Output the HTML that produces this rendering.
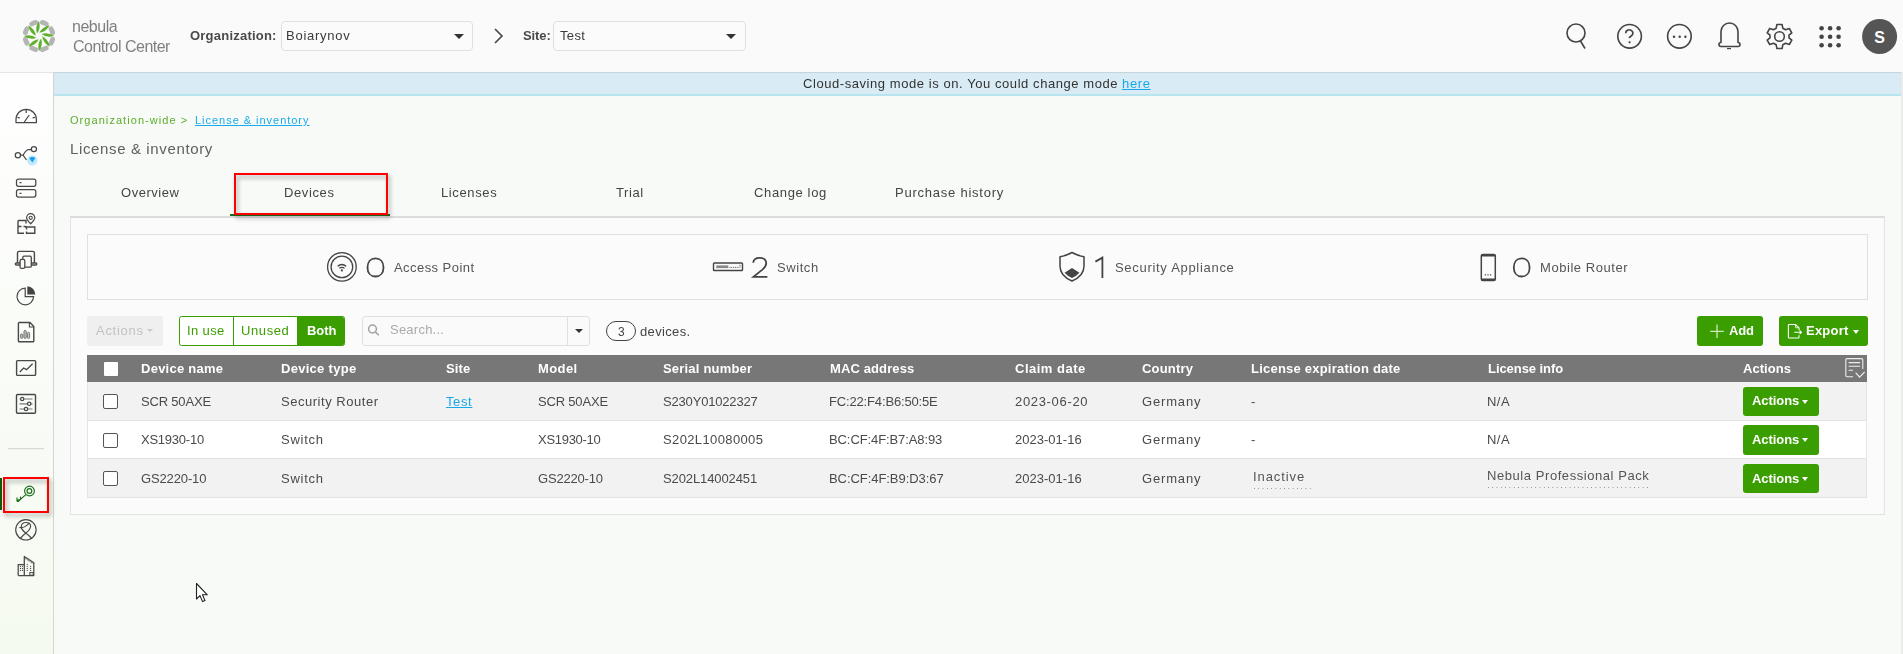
<!DOCTYPE html>
<html><head><meta charset="utf-8"><title>License &amp; inventory</title>
<style>
*{box-sizing:border-box;margin:0;padding:0}
html,body{width:1903px;height:654px;overflow:hidden;background:#f8faf8;font-family:"Liberation Sans",sans-serif;color:#555}
.abs{position:absolute}
.tx{position:absolute;white-space:pre;font-family:"Liberation Sans",sans-serif;will-change:transform}
#hdr{position:absolute;left:0;top:0;width:1903px;height:72px;background:#fafafa}
#side{position:absolute;left:0;top:72px;width:54px;height:582px;border-top:1px solid #e6e6e6;background:linear-gradient(#fefefe,#f5faf0);border-right:1px solid #d4d4d4}
#banner{position:absolute;left:54px;top:72px;width:1847px;height:24px;background:#d9ebf4;border-bottom:2px solid #b8e4f0;box-shadow:inset 0 1px 1px rgba(0,0,0,.1)}
.sel{position:absolute;height:30px;border:1px solid #e0e0e0;border-radius:4px;background:#fbfbfb}
.caret{position:absolute;width:0;height:0;border-left:5px solid transparent;border-right:5px solid transparent;border-top:5px solid #333}
#panel{position:absolute;left:70px;top:216px;width:1815px;height:299px;background:#fbfbfb;border:1px solid #e3e3e3;border-top:2px solid #dcdcdc}
#summary{position:absolute;left:87px;top:234px;width:1781px;height:66px;border:1px solid #e0e0e0;background:#fbfbfb}
.btn{position:absolute;background:#3a9e00;border-radius:3px}
.row{position:absolute;left:87px;width:1780px}
.cb{position:absolute;left:103px;width:15px;height:15px;border:1px solid #555;border-radius:2px;background:#fff}
.wcaret{position:absolute;width:0;height:0;border-left:4px solid transparent;border-right:4px solid transparent;border-top:4px solid #fff}

</style></head><body>
<div id="hdr">
 <svg class="abs" style="left:21px;top:17.5px" width="36" height="36" viewBox="-18 -18 36 36"><path fill="none" stroke="#b5b5b5" stroke-width="4.9" stroke-linecap="round" d="M3.39,-13.58A14.0,14.0 0 0 1 7.21,-12.00M12.00,-7.21A14.0,14.0 0 0 1 13.58,-3.39M13.58,3.39A14.0,14.0 0 0 1 12.00,7.21M7.21,12.00A14.0,14.0 0 0 1 3.39,13.58M-3.39,13.58A14.0,14.0 0 0 1 -7.21,12.00M-12.00,7.21A14.0,14.0 0 0 1 -13.58,3.39M-13.58,-3.39A14.0,14.0 0 0 1 -12.00,-7.21M-7.21,-12.00A14.0,14.0 0 0 1 -3.39,-13.58"/><path fill="#5fb02c" d="M-2.06,-2.45Q2.13,-7.71 0.00,-15.30Q-4.39,-8.75 -2.06,-2.45ZM0.28,-3.19Q6.96,-3.95 10.82,-10.82Q3.09,-9.29 0.28,-3.19ZM2.45,-2.06Q7.71,2.13 15.30,0.00Q8.75,-4.39 2.45,-2.06ZM3.19,0.28Q3.95,6.96 10.82,10.82Q9.29,3.09 3.19,0.28ZM2.06,2.45Q-2.13,7.71 0.00,15.30Q4.39,8.75 2.06,2.45ZM-0.28,3.19Q-6.96,3.95 -10.82,10.82Q-3.09,9.29 -0.28,3.19ZM-2.45,2.06Q-7.71,-2.13 -15.30,0.00Q-8.75,4.39 -2.45,2.06ZM-3.19,-0.28Q-3.95,-6.96 -10.82,-10.82Q-9.29,-3.09 -3.19,-0.28Z"/></svg>
 <div class="sel" style="left:281px;top:21px;width:192px"><span class="caret" style="left:172px;top:12px"></span></div>
 <svg class="abs" style="left:490px;top:27px" width="16" height="18" viewBox="0 0 16 18"><path d="M5 2 L12 9 L5 16" fill="none" stroke="#444" stroke-width="1.6"/></svg>
 <div class="sel" style="left:553px;top:21px;width:193px"><span class="caret" style="left:172px;top:12px"></span></div>
 <svg class="abs" style="left:1560px;top:15px" width="343" height="45" viewBox="1560 15 343 45" fill="none" stroke="#444" stroke-width="1.6">
  <circle cx="1576" cy="33" r="9"/><path d="M1580.5 41 L1585 48.5"/>
  <circle cx="1629.6" cy="36.3" r="11.8"/>
  <path d="M1625.7 33.2 a3.6 3.3 0 1 1 5.5 2.7 q-1.7 1 -1.9 2.2" stroke-width="1.7"/>
  <circle cx="1629.6" cy="42.3" r="1.1" fill="#444" stroke="none"/>
  <circle cx="1679.4" cy="36.3" r="11.8"/>
  <g fill="#444" stroke="none"><circle cx="1674" cy="36.7" r="1.2"/><circle cx="1679.7" cy="36.7" r="1.2"/><circle cx="1685.4" cy="36.7" r="1.2"/></g>
  <path d="M1721 42.5 q-2 0 -2 2 q0 2 2 2 h17 q2 0 2 -2 q0 -2 -2 -2 v-11 a8.5 8.5 0 0 0 -17 0 z" stroke-linejoin="round"/>
  <path d="M1727 48.6 h4" stroke-width="1.2"/>
  <g transform="translate(1779.5 36.5)">
   <path d="M-2.6,-12 L2.6,-12 L3.3,-8.3 L6.1,-6.7 L9.8,-8 L12.3,-3.6 L9.5,-1.3 L9.5,1.3 L12.3,3.6 L9.8,8 L6.1,6.7 L3.3,8.3 L2.6,12 L-2.6,12 L-3.3,8.3 L-6.1,6.7 L-9.8,8 L-12.3,3.6 L-9.5,1.3 L-9.5,-1.3 L-12.3,-3.6 L-9.8,-8 L-6.1,-6.7 L-3.3,-8.3 Z" stroke-linejoin="round"/>
   <circle r="4.8"/>
  </g>
  <g fill="#444" stroke="none">
   <circle cx="1821.6" cy="28.2" r="2.3"/><circle cx="1830.1" cy="28.2" r="2.3"/><circle cx="1838.6" cy="28.2" r="2.3"/>
   <circle cx="1821.6" cy="36.8" r="2.3"/><circle cx="1830.1" cy="36.8" r="2.3"/><circle cx="1838.6" cy="36.8" r="2.3"/>
   <circle cx="1821.6" cy="45.3" r="2.3"/><circle cx="1830.1" cy="45.3" r="2.3"/><circle cx="1838.6" cy="45.3" r="2.3"/>
  </g>
  <circle cx="1879.6" cy="36.5" r="17.5" fill="#555" stroke="none"/>
  <text x="1879.6" y="42.5" fill="#fff" stroke="none" font-family="Liberation Sans" font-weight="bold" font-size="16" text-anchor="middle">S</text>
 </svg>
</div>
<div id="side"></div>
<svg class="abs" style="left:0;top:0" width="54" height="654" viewBox="0 0 54 654" fill="none" stroke="#484848" stroke-width="1.25">
 <!-- gauge -->
 <path d="M16 122.5 V119.5 A10.2 10.2 0 0 1 36.4 119.5 V122.5 Z" stroke-linejoin="round"/>
 <path d="M26.2 109 V113 M17.5 117.3 L19.8 117.8 M34.9 117.3 L32.6 117.8 M24.3 122 L29.2 115"/>
 <!-- share -->
 <circle cx="17.9" cy="155.2" r="2.6"/><circle cx="33.9" cy="149.1" r="2.6"/>
 <path d="M20.5 155.2 H23 Q25 151 28 149.5 H31.3 M23 155.2 L26.5 160"/>
 <circle cx="32.3" cy="160.4" r="5.2" fill="#c4e8fb" stroke="none"/>
 <path d="M29.4 158.6 L30.6 157 H34 L35.2 158.6 L32.3 162.6 Z" fill="#19a3e6" stroke="none"/>
 <!-- servers -->
 <rect x="16.5" y="179" width="19.3" height="7.3" rx="2"/>
 <rect x="16.5" y="189.7" width="19.3" height="7.3" rx="2"/>
 <path d="M19.5 182.6 H21.5 M19.5 193.3 H21.5" stroke-width="1.3"/>
 <!-- floor plan -->
 <path d="M18 220.5 H26 V223.5 M26 226 V228 M18 226.5 H21.5 M23.5 226.5 H25.5 M26 227 H34.8 V233.3 H26.5 V231.5 M26.5 229.5 V228 M18 220.5 V233.3 H24" stroke-width="1.4"/>
 <path d="M30.7 223.8 Q26.6 219.8 26.6 217.8 A4.1 4.1 0 0 1 34.8 217.8 Q34.8 219.8 30.7 223.8 Z" stroke-width="1.2"/>
 <circle cx="30.7" cy="217.8" r="1.6" stroke-width="1.1"/>
 <!-- devices -->
 <path d="M17.5 263 V253 Q17.5 251.4 19.1 251.4 H32.8 Q34.4 251.4 34.4 253 V263" stroke-width="1.4"/>
 <rect x="15.3" y="263" width="21.5" height="2" rx="1" stroke-width="1.3"/>
 <rect x="22.8" y="256.2" width="8.5" height="11" rx="1.2" stroke-width="1.3" fill="#f8faf7"/>
 <rect x="20.1" y="259.4" width="4.7" height="9" rx="1.5" stroke-width="1.3" fill="#f8faf7"/>
 <!-- pie -->
 <path d="M25.2 288.2 A8.3 8.3 0 1 0 33.6 296.6 H25.2 Z" stroke-width="1.2"/>
 <path d="M27.3 286.3 A8.2 8.2 0 0 1 35.3 294.4 H27.3 Z" fill="#444" stroke="none"/>
 <!-- report -->
 <path d="M19.2 322.5 H30 L33.8 326.5 V341 Q33.8 341.8 33 341.8 H19.2 Q18.4 341.8 18.4 341 V323.3 Q18.4 322.5 19.2 322.5 Z" stroke-width="1.4"/>
 <path d="M29.4 322.8 V327 H33.6" stroke-width="1.1"/>
 <g stroke-width="0.9" stroke="#666" fill="#c8c8c8"><rect x="20.6" y="334" width="2.2" height="4.4" rx="1"/><rect x="24" y="330.4" width="2.2" height="8" rx="1"/><rect x="27.4" y="332.4" width="2.2" height="6" rx="1"/></g>
 <!-- chart -->
 <rect x="16.6" y="360.6" width="19" height="14.8" rx="0.8" stroke-width="1.4"/>
 <path d="M19.8 372 L23.6 368 L26.6 369.6 L32.6 363.8" stroke-width="1.3"/>
 <!-- settings -->
 <rect x="16.5" y="394.5" width="19" height="18.8" rx="1" stroke-width="1.4"/>
 <path d="M19.5 399 H32.5 M19.5 403.8 H32.5 M19.5 409 H32.5" stroke-width="1.2" stroke="#777"/>
 <circle cx="22.2" cy="399" r="1.6" fill="#f8faf7" stroke-width="1.2"/>
 <circle cx="29.2" cy="403.8" r="1.7" fill="#f8faf7" stroke-width="1.2"/>
 <circle cx="26" cy="409" r="1.7" fill="#f8faf7" stroke-width="1.2"/>
 <!-- divider -->
 <path d="M8 448.7 H44" stroke="#d8d8d8" stroke-width="1.2"/>
 <!-- key selected -->
 <rect x="0" y="478" width="2" height="32" fill="#0b5e0b" stroke="none"/>
 <!-- support -->
 <circle cx="25.9" cy="529.8" r="10.2" stroke-width="1.15"/>
 <path d="M20.2 538.8 C22.3 535.6 24.6 534 26.6 532.4 C29.3 530.2 30.8 528.2 30.6 525.6 C30.3 523.3 28.4 522.5 26 522.5 C23.4 522.5 21.3 524.1 21.3 526.7 C21.3 529.1 23 531 25.1 532.5 C27.6 534.3 29.9 535.8 31.8 538.8" stroke-width="1.15"/>
 <path d="M19.3 527.5 Q23.8 528.1 26.4 525.6 Q28 524.1 29.6 523" stroke-width="1.05"/>
 <!-- building -->
 <path d="M24.3 575.6 V556.4 L33.8 562.8 V575.6 Z M18.2 575.6 V564.5 H24.3 M18.2 575.6 H33.8" stroke-width="1.25" stroke-linejoin="round"/>
 <path d="M25.2 558.6 L33 563.8" stroke-width="0.9" stroke-dasharray="1 0.8"/>
 <g fill="#444" stroke="none">
  <circle cx="20.4" cy="566.3" r="0.6"/><circle cx="22.4" cy="566.3" r="0.6"/>
  <circle cx="20.4" cy="568.4" r="0.6"/><circle cx="22.4" cy="568.4" r="0.6"/>
  <circle cx="20.4" cy="570.4" r="0.6"/><circle cx="22.4" cy="570.4" r="0.6"/>
  <circle cx="27.2" cy="564.3" r="0.6"/>
  <circle cx="27.2" cy="566.3" r="0.6"/><circle cx="30.6" cy="566.3" r="0.6"/>
  <circle cx="27.2" cy="568.4" r="0.6"/><circle cx="30.6" cy="568.4" r="0.6"/>
  <circle cx="27.2" cy="570.4" r="0.6"/><circle cx="30.6" cy="570.4" r="0.6"/>
 </g>
 <rect x="29.8" y="572.6" width="3.4" height="2.6" stroke-width="1"/>
</svg>
<div class="abs" style="left:3px;top:477px;width:46px;height:36px;border:2px solid #f00;filter:drop-shadow(2px 3px 2px rgba(0,0,0,.35))"></div>
<svg class="abs" style="left:0;top:470px" width="54" height="40" viewBox="0 470 54 40" fill="none" stroke="#1a701a" stroke-width="1.15">
 <circle cx="29.5" cy="491" r="4.9"/>
 <circle cx="29.4" cy="491" r="2.4"/>
 <path d="M25.8 494.6 L17.8 501.8 M17.8 501.8 L17 500.8 L17 497.6 M20.6 499.3 L20.4 496.6 M17.4 500.4 L20.8 499.2"/>
</svg>

<div id="banner"></div>
<div id="panel"></div>
<div class="abs" style="left:230px;top:214px;width:160px;height:2px;background:#1b6e1b"></div>
<div class="abs" style="left:234px;top:173px;width:154px;height:42px;border:2px solid #f00;filter:drop-shadow(2px 3px 2px rgba(0,0,0,.35))"></div>
<div id="summary"></div>
<!-- summary icons -->
<svg class="abs" style="left:320px;top:245px" width="1200" height="45" viewBox="320 245 1200 45" fill="none" stroke="#444" stroke-width="1.3">
 <circle cx="341.9" cy="266.9" r="14.3"/>
 <circle cx="341.9" cy="266.9" r="10.8"/>
 <path d="M337.6 266.3 Q341.9 262.6 346.2 266.3 M339.3 268.3 Q341.9 266.3 344.5 268.3"/>
 <circle cx="341.9" cy="270.4" r="1.1" fill="#444" stroke="none"/>
 <rect x="713.5" y="263" width="29" height="7.5" rx="0.8" stroke-width="1.4"/>
 <rect x="716.3" y="265.4" width="12" height="2.7" fill="#888" stroke="none"/>
 <path d="M729.5 267.4 H739 M740 264.8 V268" stroke-width="0.9" stroke-dasharray="1 0.8"/>
 <path d="M1072 252.5 Q1066 256 1060 256.8 V266 Q1060 276 1072 281 Q1084 276 1084 266 V256.8 Q1078 256 1072 252.5 Z" stroke-width="1.5" stroke-linejoin="round"/>
 <path d="M1064.6 272.8 L1072 268 L1079.4 272.8 Q1076 276.6 1072 278 Q1068 276.6 1064.6 272.8 Z" fill="#444" stroke="none"/>
 <rect x="1481.3" y="254.5" width="14" height="26" rx="1.6" stroke-width="1.5"/>
 <path d="M1481.3 255.5 H1495.3 M1481.3 279.5 H1495.3" stroke-width="2"/>
 <path d="M1484.8 274.8 H1492" stroke-width="1.2" stroke-dasharray="1.2 1.4"/>
</svg>
<svg class="abs" style="left:360px;top:250px" width="1180" height="35" viewBox="360 250 1180 35" fill="none" stroke="#444" stroke-width="1.8">
 <path d="M375.5 258.29999999999995 C380.30 258.29999999999995 383.5 261.94 383.5 267.4 C383.5 272.86 380.30 276.5 375.5 276.5 C370.70 276.5 367.5 272.86 367.5 267.4 C367.5 261.94 370.70 258.29999999999995 375.5 258.29999999999995 Z"/>
 <path d="M753.2 262.8 Q753.6 257.9 759.7 257.9 Q766.2 257.9 766.2 263.2 Q766.2 266.3 762.4 269.6 L753.4 276.9 H767.4"/>
 <path d="M1095.4 261.6 L1102.4 257.6 V278.1"/>
 <path d="M1521.7 258.29999999999995 C1526.44 258.29999999999995 1529.6000000000001 261.94 1529.6000000000001 267.4 C1529.6000000000001 272.86 1526.44 276.5 1521.7 276.5 C1516.96 276.5 1513.8 272.86 1513.8 267.4 C1513.8 261.94 1516.96 258.29999999999995 1521.7 258.29999999999995 Z"/>
</svg>
<div class="abs" style="left:1901px;top:72px;width:2px;height:582px;background:#ebebeb"></div>
<!-- toolbar -->
<div class="abs" style="left:87px;top:316px;width:76px;height:30px;background:#efefef;border-radius:2px"></div>
<div class="abs" style="left:147px;top:329px;width:0;height:0;border-left:3.5px solid transparent;border-right:3.5px solid transparent;border-top:3.5px solid #c8c8c8"></div>
<div class="abs" style="left:179px;top:316px;width:166px;height:30px;border:1.2px solid #3a9e00;border-radius:2.5px;background:#fff;overflow:hidden">
 <div class="abs" style="left:53px;top:0;width:1.2px;height:28px;background:#3a9e00"></div>
 <div class="abs" style="left:117px;top:0;width:50px;height:28px;background:#3a9e00"></div>
</div>
<div class="abs" style="left:362px;top:316px;width:228px;height:30px;border:1px solid #e0e0e0;border-radius:3px;background:#fafafa">
 <div class="abs" style="left:203.5px;top:0;width:1px;height:28px;background:#e0e0e0"></div>
 <div class="abs" style="left:211.5px;top:12px;width:0;height:0;border-left:4px solid transparent;border-right:4px solid transparent;border-top:4.5px solid #333"></div>
</div>
<svg class="abs" style="left:365px;top:320px" width="20" height="20" viewBox="365 320 20 20" fill="none" stroke="#a0a0a0" stroke-width="1.5">
 <circle cx="372.5" cy="329" r="3.9"/><path d="M375.3 331.8 L378.8 335.3"/>
</svg>
<div class="abs" style="left:606px;top:321px;width:30px;height:20px;border:1.2px solid #444;border-radius:10px"></div>
<div class="btn" style="left:1697px;top:316px;width:66px;height:30px"></div>
<svg class="abs" style="left:1708px;top:323px" width="18" height="16" viewBox="1708 323 18 16" fill="none" stroke="#cfe8bf" stroke-width="1.3">
 <path d="M1717 324.6 V338 M1710.2 331.3 H1723.8"/>
</svg>
<div class="btn" style="left:1779px;top:316px;width:89px;height:30px"></div>
<svg class="abs" style="left:1786px;top:322px" width="18" height="18" viewBox="1786 322 18 18" fill="none" stroke="#fff" stroke-width="1.1" stroke-linejoin="round">
 <path d="M1799 335.2 V337.4 Q1799 338 1798.4 338 H1789 Q1788.4 338 1788.4 337.4 V325.1 Q1788.4 324.5 1789 324.5 H1795.4 L1799 327.8 V330"/>
 <path d="M1795.4 324.6 V327.3 Q1795.4 327.8 1795.9 327.8 H1798.8" stroke-width="0.8"/>
 <path d="M1794.2 332.3 H1801.4 M1799.5 330.4 L1801.5 332.3 L1799.5 334.2"/>
</svg>
<div class="wcaret" style="left:1852.5px;top:329.5px;border-width:4px 3.5px 0 3.5px"></div>
<!-- table -->
<div class="row" style="top:355px;height:27px;background:#777"></div>
<div class="row" style="top:382px;height:39px;background:#f2f2f2;border-bottom:1px solid #e2e2e2;border-left:1px solid #e4e4e4;border-right:1px solid #e4e4e4"></div>
<div class="row" style="top:421px;height:38px;background:#fff;border-bottom:1px solid #e2e2e2;border-left:1px solid #e4e4e4;border-right:1px solid #e4e4e4"></div>
<div class="row" style="top:459px;height:39px;background:#f2f2f2;border-bottom:1px solid #e2e2e2;border-left:1px solid #e4e4e4;border-right:1px solid #e4e4e4"></div>
<div class="abs" style="left:103.5px;top:362px;width:14px;height:13.5px;background:#fff;border-radius:1px"></div>
<div class="cb" style="top:394px"></div>
<div class="cb" style="top:432.5px"></div>
<div class="cb" style="top:471px"></div>
<svg class="abs" style="left:1843px;top:356px" width="24" height="24" viewBox="1843 356 24 24" fill="none" stroke="#eee" stroke-width="1.1">
 <path d="M1853 376.8 H1847 Q1845.8 376.8 1845.8 375.6 V359.6 Q1845.8 358.6 1847 358.6 H1861.6 Q1862.8 358.6 1862.8 359.6 V369"/>
 <path d="M1848.6 362.6 H1860 M1848.6 366.2 H1860 M1848.6 370.2 H1853"/>
 <path d="M1855.6 372.6 L1859.6 377.2 L1864.6 372"/>
</svg>
<div class="btn" style="left:1743px;top:387px;width:76px;height:28.5px"></div>
<div class="btn" style="left:1743px;top:425px;width:76px;height:29.5px"></div>
<div class="btn" style="left:1743px;top:464px;width:76px;height:29px"></div>
<div class="wcaret" style="left:1802px;top:399.5px;border-width:4px 3.8px 0 3.8px"></div>
<div class="wcaret" style="left:1802px;top:438px;border-width:4px 3.8px 0 3.8px"></div>
<div class="wcaret" style="left:1802px;top:477px;border-width:4px 3.8px 0 3.8px"></div>
<div class="abs" style="left:1254px;top:488px;width:58px;height:1px;background:linear-gradient(to right,#8a8a8a 1px,transparent 1px) 0 0/4.3px 1px repeat-x"></div>
<div class="abs" style="left:1488px;top:487px;width:162px;height:1px;background:linear-gradient(to right,#8a8a8a 1px,transparent 1px) 0 0/4.3px 1px repeat-x"></div>
<!-- cursor -->
<svg class="abs" style="left:195px;top:582px" width="14" height="22" viewBox="0 0 14 22">
 <path d="M1.5 1.5 V17 L5 13.6 L7.6 19.6 L10 18.6 L7.5 12.8 H12.3 Z" fill="#fff" stroke="#222" stroke-width="1.1" stroke-linejoin="round"/>
</svg>

<div class="tx" style="left:71.60px;top:16.70px;font-size:16px;line-height:19px;font-weight:normal;color:#808080;letter-spacing:-0.490px;">nebula</div>
<div class="tx" style="left:72.50px;top:37.20px;font-size:16px;line-height:19px;font-weight:normal;color:#808080;letter-spacing:-0.509px;">Control Center</div>
<div class="tx" style="left:190.40px;top:27.90px;font-size:13px;line-height:16px;font-weight:bold;color:#4a4a4a;letter-spacing:0.221px;">Organization:</div>
<div class="tx" style="left:285.90px;top:28.00px;font-size:13px;line-height:16px;font-weight:normal;color:#3c3c3c;letter-spacing:0.749px;">Boiarynov</div>
<div class="tx" style="left:522.60px;top:27.90px;font-size:13px;line-height:16px;font-weight:bold;color:#4a4a4a;letter-spacing:-0.110px;">Site:</div>
<div class="tx" style="left:560.00px;top:28.00px;font-size:13px;line-height:16px;font-weight:normal;color:#3c3c3c;letter-spacing:0.357px;">Test</div>
<div class="tx" style="left:802.50px;top:76.10px;font-size:13px;line-height:16px;font-weight:normal;color:#333;letter-spacing:0.565px;">Cloud-saving mode is on. You could change mode</div>
<div class="tx" style="left:1121.50px;top:76.10px;font-size:13px;line-height:16px;font-weight:normal;color:#19a6ec;letter-spacing:0.670px;text-decoration:underline;">here</div>
<div class="tx" style="left:70.20px;top:114.10px;font-size:11px;line-height:13px;font-weight:normal;color:#5aae2a;letter-spacing:1.060px;">Organization-wide &gt;</div>
<div class="tx" style="left:194.60px;top:114.10px;font-size:11px;line-height:13px;font-weight:normal;color:#18aaea;letter-spacing:0.972px;text-decoration:underline;">License &amp; inventory</div>
<div class="tx" style="left:69.50px;top:139.80px;font-size:15px;line-height:18px;font-weight:normal;color:#606060;letter-spacing:0.633px;">License &amp; inventory</div>
<div class="tx" style="left:120.70px;top:185.00px;font-size:13px;line-height:16px;font-weight:normal;color:#444;letter-spacing:0.516px;">Overview</div>
<div class="tx" style="left:283.90px;top:185.00px;font-size:13px;line-height:16px;font-weight:normal;color:#444;letter-spacing:0.611px;">Devices</div>
<div class="tx" style="left:441.00px;top:185.00px;font-size:13px;line-height:16px;font-weight:normal;color:#444;letter-spacing:0.627px;">Licenses</div>
<div class="tx" style="left:616.00px;top:185.00px;font-size:13px;line-height:16px;font-weight:normal;color:#444;letter-spacing:0.599px;">Trial</div>
<div class="tx" style="left:753.60px;top:185.00px;font-size:13px;line-height:16px;font-weight:normal;color:#444;letter-spacing:0.637px;">Change log</div>
<div class="tx" style="left:894.50px;top:185.00px;font-size:13px;line-height:16px;font-weight:normal;color:#444;letter-spacing:0.765px;">Purchase history</div>
<div class="tx" style="left:394.40px;top:259.90px;font-size:13px;line-height:16px;font-weight:normal;color:#555;letter-spacing:0.443px;">Access Point</div>
<div class="tx" style="left:776.60px;top:259.70px;font-size:13px;line-height:16px;font-weight:normal;color:#555;letter-spacing:0.568px;">Switch</div>
<div class="tx" style="left:1114.90px;top:259.80px;font-size:13px;line-height:16px;font-weight:normal;color:#555;letter-spacing:0.698px;">Security Appliance</div>
<div class="tx" style="left:1539.70px;top:259.70px;font-size:13px;line-height:16px;font-weight:normal;color:#555;letter-spacing:0.559px;">Mobile Router</div>
<div class="tx" style="left:96.20px;top:323.00px;font-size:13px;line-height:16px;font-weight:normal;color:#c2c2c2;letter-spacing:0.712px;">Actions</div>
<div class="tx" style="left:187.20px;top:323.00px;font-size:13px;line-height:16px;font-weight:normal;color:#3a9e00;letter-spacing:0.363px;">In use</div>
<div class="tx" style="left:241.30px;top:323.00px;font-size:13px;line-height:16px;font-weight:normal;color:#3a9e00;letter-spacing:0.604px;">Unused</div>
<div class="tx" style="left:306.60px;top:323.00px;font-size:13px;line-height:16px;font-weight:bold;color:#fff;letter-spacing:-0.086px;">Both</div>
<div class="tx" style="left:390.00px;top:321.90px;font-size:13px;line-height:16px;font-weight:normal;color:#aaa;letter-spacing:0.236px;">Search...</div>
<div class="tx" style="left:617.50px;top:324.50px;font-size:12px;line-height:14px;font-weight:normal;color:#444;letter-spacing:0.000px;">3</div>
<div class="tx" style="left:640.00px;top:323.50px;font-size:13px;line-height:16px;font-weight:normal;color:#444;letter-spacing:0.346px;">devices.</div>
<div class="tx" style="left:1728.70px;top:323.10px;font-size:13px;line-height:16px;font-weight:bold;color:#fff;letter-spacing:-0.115px;">Add</div>
<div class="tx" style="left:1806.00px;top:323.10px;font-size:13px;line-height:16px;font-weight:bold;color:#fff;letter-spacing:0.232px;">Export</div>
<div class="tx" style="left:140.90px;top:361.00px;font-size:13px;line-height:16px;font-weight:bold;color:#fff;letter-spacing:0.254px;">Device name</div>
<div class="tx" style="left:281.40px;top:361.00px;font-size:13px;line-height:16px;font-weight:bold;color:#fff;letter-spacing:0.287px;">Device type</div>
<div class="tx" style="left:445.60px;top:361.00px;font-size:13px;line-height:16px;font-weight:bold;color:#fff;letter-spacing:0.163px;">Site</div>
<div class="tx" style="left:537.50px;top:361.00px;font-size:13px;line-height:16px;font-weight:bold;color:#fff;letter-spacing:0.390px;">Model</div>
<div class="tx" style="left:663.00px;top:361.00px;font-size:13px;line-height:16px;font-weight:bold;color:#fff;letter-spacing:0.197px;">Serial number</div>
<div class="tx" style="left:829.90px;top:361.00px;font-size:13px;line-height:16px;font-weight:bold;color:#fff;letter-spacing:0.115px;">MAC address</div>
<div class="tx" style="left:1015.30px;top:361.00px;font-size:13px;line-height:16px;font-weight:bold;color:#fff;letter-spacing:0.499px;">Claim date</div>
<div class="tx" style="left:1142.30px;top:361.00px;font-size:13px;line-height:16px;font-weight:bold;color:#fff;letter-spacing:0.200px;">Country</div>
<div class="tx" style="left:1250.50px;top:361.00px;font-size:13px;line-height:16px;font-weight:bold;color:#fff;letter-spacing:0.220px;">License expiration date</div>
<div class="tx" style="left:1488.10px;top:361.00px;font-size:13px;line-height:16px;font-weight:bold;color:#fff;letter-spacing:-0.064px;">License info</div>
<div class="tx" style="left:1743.00px;top:361.00px;font-size:13px;line-height:16px;font-weight:bold;color:#fff;letter-spacing:0.043px;">Actions</div>
<div class="tx" style="left:140.90px;top:394.00px;font-size:13px;line-height:16px;font-weight:normal;color:#4a4a4a;letter-spacing:-0.183px;">SCR 50AXE</div>
<div class="tx" style="left:281.40px;top:394.00px;font-size:13px;line-height:16px;font-weight:normal;color:#4a4a4a;letter-spacing:0.531px;">Security Router</div>
<div class="tx" style="left:445.60px;top:394.00px;font-size:13px;line-height:16px;font-weight:normal;color:#18a8ea;letter-spacing:0.623px;text-decoration:underline;">Test</div>
<div class="tx" style="left:537.50px;top:394.00px;font-size:13px;line-height:16px;font-weight:normal;color:#4a4a4a;letter-spacing:-0.183px;">SCR 50AXE</div>
<div class="tx" style="left:663.00px;top:394.00px;font-size:13px;line-height:16px;font-weight:normal;color:#4a4a4a;letter-spacing:-0.178px;">S230Y01022327</div>
<div class="tx" style="left:828.90px;top:394.00px;font-size:13px;line-height:16px;font-weight:normal;color:#4a4a4a;letter-spacing:-0.157px;">FC:22:F4:B6:50:5E</div>
<div class="tx" style="left:1015.30px;top:394.00px;font-size:13px;line-height:16px;font-weight:normal;color:#4a4a4a;letter-spacing:0.670px;">2023-06-20</div>
<div class="tx" style="left:1142.30px;top:394.00px;font-size:13px;line-height:16px;font-weight:normal;color:#4a4a4a;letter-spacing:0.840px;">Germany</div>
<div class="tx" style="left:1250.50px;top:394.00px;font-size:13px;line-height:16px;font-weight:normal;color:#4a4a4a;letter-spacing:0.000px;">-</div>
<div class="tx" style="left:1487.10px;top:394.00px;font-size:13px;line-height:16px;font-weight:normal;color:#4a4a4a;letter-spacing:0.450px;">N/A</div>
<div class="tx" style="left:140.90px;top:431.80px;font-size:13px;line-height:16px;font-weight:normal;color:#4a4a4a;letter-spacing:-0.240px;">XS1930-10</div>
<div class="tx" style="left:281.40px;top:431.80px;font-size:13px;line-height:16px;font-weight:normal;color:#4a4a4a;letter-spacing:0.728px;">Switch</div>
<div class="tx" style="left:537.50px;top:431.80px;font-size:13px;line-height:16px;font-weight:normal;color:#4a4a4a;letter-spacing:-0.290px;">XS1930-10</div>
<div class="tx" style="left:663.00px;top:431.80px;font-size:13px;line-height:16px;font-weight:normal;color:#4a4a4a;letter-spacing:0.375px;">S202L10080005</div>
<div class="tx" style="left:828.90px;top:431.80px;font-size:13px;line-height:16px;font-weight:normal;color:#4a4a4a;letter-spacing:-0.097px;">BC:CF:4F:B7:A8:93</div>
<div class="tx" style="left:1015.30px;top:431.80px;font-size:13px;line-height:16px;font-weight:normal;color:#4a4a4a;letter-spacing:0.015px;">2023-01-16</div>
<div class="tx" style="left:1142.30px;top:431.80px;font-size:13px;line-height:16px;font-weight:normal;color:#4a4a4a;letter-spacing:0.840px;">Germany</div>
<div class="tx" style="left:1250.50px;top:431.80px;font-size:13px;line-height:16px;font-weight:normal;color:#4a4a4a;letter-spacing:0.000px;">-</div>
<div class="tx" style="left:1487.10px;top:431.80px;font-size:13px;line-height:16px;font-weight:normal;color:#4a4a4a;letter-spacing:0.450px;">N/A</div>
<div class="tx" style="left:140.90px;top:470.90px;font-size:13px;line-height:16px;font-weight:normal;color:#4a4a4a;letter-spacing:-0.133px;">GS2220-10</div>
<div class="tx" style="left:281.40px;top:470.90px;font-size:13px;line-height:16px;font-weight:normal;color:#4a4a4a;letter-spacing:0.728px;">Switch</div>
<div class="tx" style="left:537.50px;top:470.90px;font-size:13px;line-height:16px;font-weight:normal;color:#4a4a4a;letter-spacing:-0.183px;">GS2220-10</div>
<div class="tx" style="left:663.00px;top:470.90px;font-size:13px;line-height:16px;font-weight:normal;color:#4a4a4a;letter-spacing:-0.108px;">S202L14002451</div>
<div class="tx" style="left:828.90px;top:470.90px;font-size:13px;line-height:16px;font-weight:normal;color:#4a4a4a;letter-spacing:-0.060px;">BC:CF:4F:B9:D3:67</div>
<div class="tx" style="left:1015.30px;top:470.90px;font-size:13px;line-height:16px;font-weight:normal;color:#4a4a4a;letter-spacing:0.015px;">2023-01-16</div>
<div class="tx" style="left:1142.30px;top:470.90px;font-size:13px;line-height:16px;font-weight:normal;color:#4a4a4a;letter-spacing:0.840px;">Germany</div>
<div class="tx" style="left:1252.90px;top:468.70px;font-size:13px;line-height:16px;font-weight:normal;color:#555;letter-spacing:0.904px;">Inactive</div>
<div class="tx" style="left:1487.10px;top:467.60px;font-size:13px;line-height:16px;font-weight:normal;color:#555;letter-spacing:0.563px;">Nebula Professional Pack</div>
<div class="tx" style="left:1752.20px;top:393.30px;font-size:13px;line-height:16px;font-weight:bold;color:#fff;letter-spacing:-0.073px;">Actions</div>
<div class="tx" style="left:1752.20px;top:432.00px;font-size:13px;line-height:16px;font-weight:bold;color:#fff;letter-spacing:-0.073px;">Actions</div>
<div class="tx" style="left:1752.20px;top:470.90px;font-size:13px;line-height:16px;font-weight:bold;color:#fff;letter-spacing:-0.073px;">Actions</div>
</body></html>
